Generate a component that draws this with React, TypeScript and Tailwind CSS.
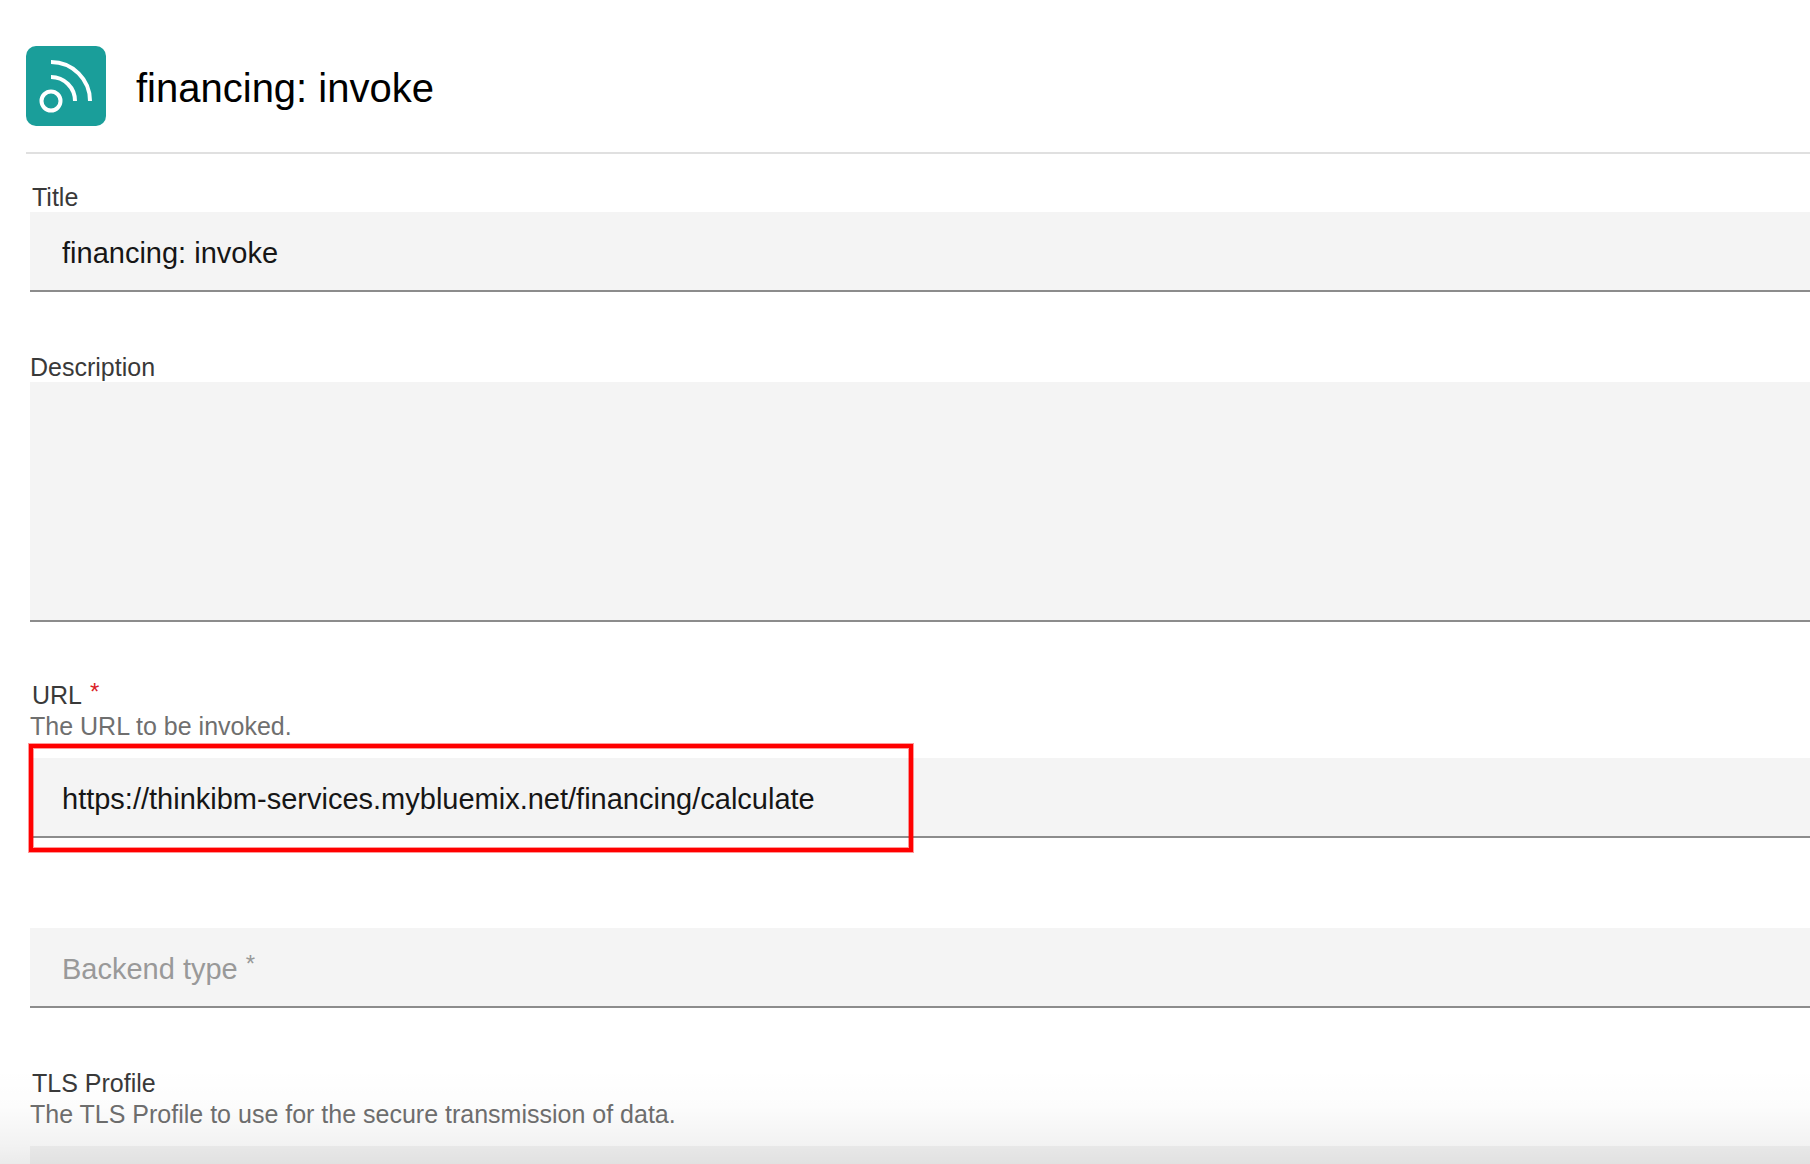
import type { ReactNode } from "react";

const box =
  "block w-full border-b-2 border-[#8c8c8c] bg-[#f4f4f4] px-8 text-[29px] text-[#161616] outline-none";

type FieldProps = {
  id: string;
  label: string;
  helper?: string;
  required?: boolean;
  flush?: boolean;
  children: ReactNode;
};

function Field({ id, label, helper, required, flush, children }: FieldProps) {
  return (
    <div className="flex flex-col">
      <label
        htmlFor={id}
        className={`flex text-[25px] leading-[30px] text-[#393939] ${flush ? "" : "pl-0.5"}`}
      >
        {label}
        {required && <span className="ml-2 text-[24px] leading-6 text-[#da1e28]">*</span>}
      </label>
      {helper && (
        <p id={`${id}-help`} className="mb-4 text-[25px] leading-8 text-[#6f6f6f]">
          {helper}
        </p>
      )}
      {children}
    </div>
  );
}

function InvokeIcon() {
  return (
    <svg viewBox="0 0 80 80" className="size-20 shrink-0" aria-hidden="true">
      <rect width="80" height="80" rx="10" fill="#1a9e9a" />
      <g fill="none" stroke="#fff" strokeWidth="4">
        <circle cx="25" cy="55" r="9.5" />
        <path d="M25 31A24 24 0 0 1 49 55" />
        <path d="M25 16A39 39 0 0 1 64 55" />
      </g>
    </svg>
  );
}

export default function App() {
  return (
    <main className="relative h-screen overflow-hidden bg-white pl-[26px] pt-[46px] font-['Liberation_Sans',Arial,sans-serif]">
      <header className="flex items-center gap-[30px] border-b-2 border-[#e0e0e0] pb-[26px]">
        <InvokeIcon />
        <h1 className="pt-1 text-[40px] leading-[48px] text-black">financing: invoke</h1>
      </header>

      <form className="flex flex-col pl-1 pt-7">
        <Field id="title" label="Title">
          <input id="title" defaultValue="financing: invoke" className={`${box} h-20 pt-1`} />
        </Field>

        <div className="mt-[60px]">
          <Field id="description" label="Description" flush>
            <textarea id="description" className={`${box} h-60 resize-none py-5`} />
          </Field>
        </div>

        <div className="mt-[58px]">
          <Field id="url" label="URL" helper="The URL to be invoked." required>
            <div className="relative">
              <input
                id="url"
                aria-describedby="url-help"
                required
                defaultValue="https://thinkibm-services.mybluemix.net/financing/calculate"
                className={`${box} h-20 pt-1`}
              />
              <div className="pointer-events-none absolute -bottom-[14px] -left-px -top-[14px] w-[884px] border-4 border-[#ff0000] ring-1 ring-[#ff0000]/40 inset-ring-1 inset-ring-[#ff0000]/40" />
            </div>
          </Field>
        </div>

        <div className="relative mt-[90px]">
          <input id="backend" required className={`${box} h-20`} />
          <label
            htmlFor="backend"
            className="absolute inset-y-0 left-8 flex items-center gap-2 pt-1 text-[29px] text-[#999999]"
          >
            Backend type
            <span className="pb-3 text-[24px]">*</span>
          </label>
        </div>

        <div className="mt-[60px]">
          <Field
            id="tls"
            label="TLS Profile"
            helper="The TLS Profile to use for the secure transmission of data."
          >
            <input id="tls" aria-describedby="tls-help" className={`${box} h-20`} />
          </Field>
        </div>
      </form>

      <div className="pointer-events-none absolute inset-x-0 bottom-0 h-24 bg-[linear-gradient(to_bottom,rgba(0,0,0,0),rgba(0,0,0,0.01)_40%,rgba(0,0,0,0.05)_81%,rgba(0,0,0,0.08))]" />
    </main>
  );
}
